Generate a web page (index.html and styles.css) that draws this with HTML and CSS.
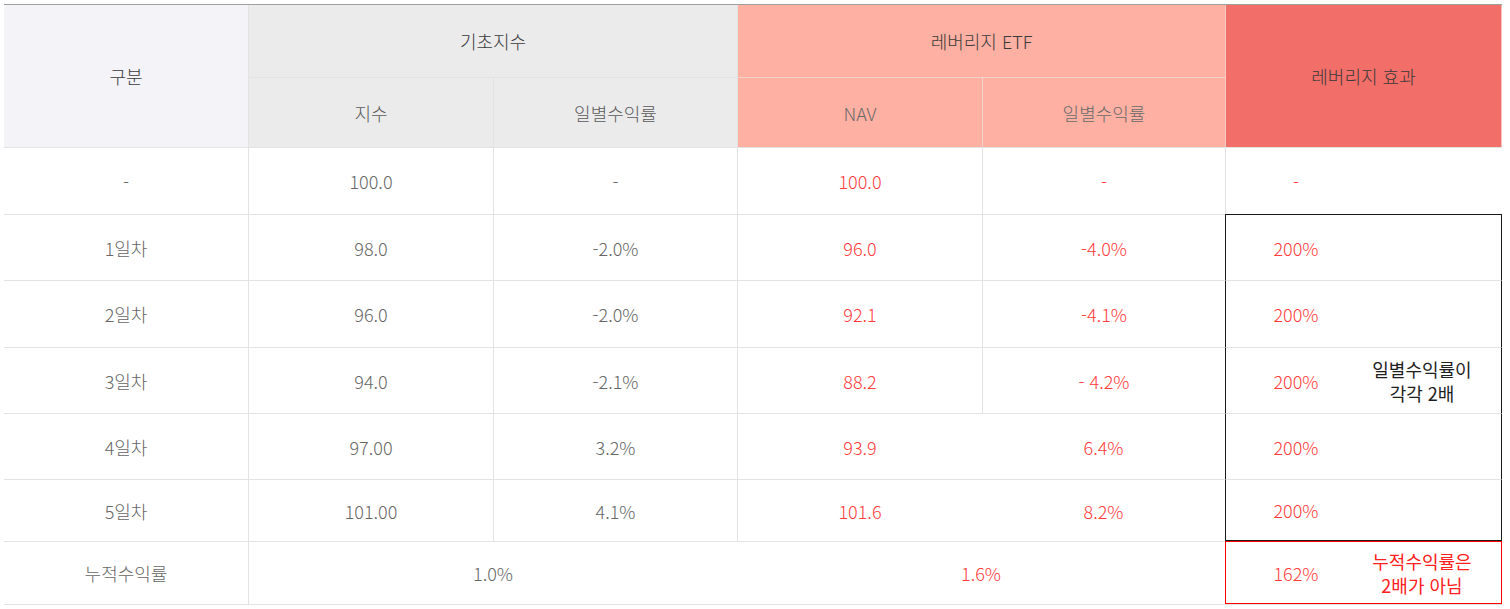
FILE: index.html
```html
<!DOCTYPE html>
<html lang="ko">
<head>
<meta charset="utf-8">
<title>레버리지 ETF</title>
<link rel="stylesheet" href="styles.css">
</head>
<body>
<div class="sheet">
  <div class="cell first top h-cat span-r2">구분</div>
  <div class="cell top h-base span-c2">기초지수</div>
  <div class="cell top h-etf h-etf-main span-c2">레버리지 ETF</div>
  <div class="cell top h-eff span-r2">레버리지 효과</div>

  <div class="cell h-base sub">지수</div>
  <div class="cell h-base sub">일별수익률</div>
  <div class="cell h-etf sub">NAV</div>
  <div class="cell h-etf sub">일별수익률</div>

  <div class="cell first">-</div>
  <div class="cell">100.0</div>
  <div class="cell">-</div>
  <div class="cell red">100.0</div>
  <div class="cell red">-</div>
  <div class="cell eff red"><span class="pct">-</span><span class="note"></span></div>

  <div class="cell first">1일차</div>
  <div class="cell">98.0</div>
  <div class="cell">-2.0%</div>
  <div class="cell red">96.0</div>
  <div class="cell red">-4.0%</div>
  <div class="cell eff red box box-top"><span class="pct">200%</span><span class="note"></span></div>

  <div class="cell first">2일차</div>
  <div class="cell">96.0</div>
  <div class="cell">-2.0%</div>
  <div class="cell red">92.1</div>
  <div class="cell red">-4.1%</div>
  <div class="cell eff red box"><span class="pct">200%</span><span class="note"></span></div>

  <div class="cell first">3일차</div>
  <div class="cell">94.0</div>
  <div class="cell">-2.1%</div>
  <div class="cell red">88.2</div>
  <div class="cell red">- 4.2%</div>
  <div class="cell eff red box"><span class="pct">200%</span><span class="note dark">일별수익률이<br>각각 2배</span></div>

  <div class="cell first">4일차</div>
  <div class="cell">97.00</div>
  <div class="cell">3.2%</div>
  <div class="cell red">93.9</div>
  <div class="cell red nol">6.4%</div>
  <div class="cell eff red box"><span class="pct">200%</span><span class="note"></span></div>

  <div class="cell first">5일차</div>
  <div class="cell">101.00</div>
  <div class="cell">4.1%</div>
  <div class="cell red">101.6</div>
  <div class="cell red nol">8.2%</div>
  <div class="cell eff red box box-bottom"><span class="pct">200%</span><span class="note"></span></div>

  <div class="cell first">누적수익률</div>
  <div class="cell span-c2">1.0%</div>
  <div class="cell red span-c2 nol">1.6%</div>
  <div class="cell eff red redbox"><span class="pct">162%</span><span class="note">누적수익률은<br>2배가 아님</span></div>
</div>
</body>
</html>
```
FILE: styles.css
```css
* {
  box-sizing: border-box;
}

body {
  margin: 0;
  background: #ffffff;
  font-family: "Noto Sans CJK KR", "Noto Sans", sans-serif;
  font-size: 18px;
  font-weight: 300;
  color: #666666;
}

.sheet {
  display: grid;
  grid-template-columns: 244px 245px 244px 245px 243px 277px;
  grid-template-rows: 72px 70px 67px 66px 67px 66px 66px 62px 63px;
  width: max-content;
  margin: 4px 0 0 4px;
  border-top: 1px solid #a0a0a0;
  border-bottom: 1px solid #e3e3e3;
}

.cell {
  display: flex;
  align-items: center;
  justify-content: center;
  border-top: 1px solid #e3e3e3;
  border-left: 1px solid #e3e3e3;
  line-height: 24px;
  white-space: nowrap;
}

.first {
  border-left: none;
}

.top {
  border-top: none;
}

.nol {
  border-left: none;
}

.span-r2 {
  grid-row: span 2;
}

.span-c2 {
  grid-column: span 2;
}

/* header */
.h-cat {
  background: #f3f3f8;
  color: #3a3a3a;
}

.h-base {
  background: #ebebeb;
  color: #3a3a3a;
}

.h-base.sub {
  color: #5a5a5a;
}

.h-etf {
  background: #feb0a3;
  color: #3a3a3a;
}

.h-etf.sub {
  color: #6a6a6a;
  border-top-color: #f6d2cc;
}

.h-etf.sub + .h-etf.sub {
  border-left-color: #f6d2cc;
}

.h-eff {
  background: #f26e68;
  color: #3a3a3a;
  border-left-color: #f4cbc6;
  border-right: 1px solid #f9c0bb;
}

/* data */
.red {
  color: #ff3b3b;
}

.eff {
  display: grid;
  grid-template-columns: 140px 112px;
  align-items: center;
  justify-items: center;
  align-content: center;
  justify-content: start;
}

.note {
  text-align: center;
  line-height: 24px;
}

.note.dark {
  color: #1e1e1e;
  font-weight: 400;
}

.cell.box {
  border-left: 1px solid #1a1a1a;
  border-right: 1px solid #1a1a1a;
}

.cell.box-top {
  border-top: 1px solid #1a1a1a;
}

.cell.box-bottom {
  border-bottom: 1px solid #1a1a1a;
}

.cell.redbox {
  border: 1px solid #ff0000;
}

.cell.redbox .note {
  color: #ff2020;
  font-weight: 400;
}
```
